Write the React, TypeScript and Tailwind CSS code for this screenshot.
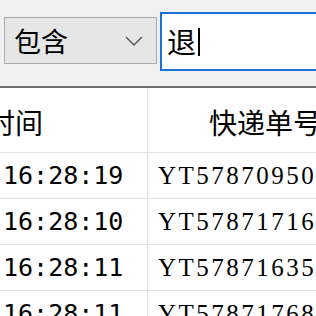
const rows = [
  { time: "16:28:19", no: "YT5787095021" },
  { time: "16:28:10", no: "YT5787171608" },
  { time: "16:28:11", no: "YT5787163512" },
  { time: "16:28:11", no: "YT5787176823" },
];

const cjk = { fontFamily: '"Noto Sans CJK SC", "Noto Sans", sans-serif' };

export default function App() {
  return (
    <div className="w-[316px] h-[316px] overflow-hidden bg-white text-black">
      <div className="h-[86px] bg-[#f0f0f0] flex items-start">
        <div className="mt-[17px] ml-[4px] w-[153px] h-[47px] shrink-0 border border-[#acacac] bg-[#e6e6e6] flex items-center pl-[9px] pr-[12px]">
          <span className="text-[27px] leading-none" style={cjk}>
            包含
          </span>
          <svg className="ml-auto" width="20" height="12" viewBox="0 0 20 12">
            <path d="M2 2 L10 10 L18 2" fill="none" stroke="#555" strokeWidth="1.4" />
          </svg>
        </div>
        <div className="mt-[12px] ml-[3px] w-[170px] h-[59px] shrink-0 border-2 border-[#1a73d1] bg-white flex items-center pl-[5px]">
          <span className="text-[29px] leading-none" style={cjk}>
            退
          </span>
          <span className="ml-[2px] w-[1.5px] h-[28px] bg-black" />
        </div>
      </div>
      <div className="h-[2px] bg-[#6e6e6e]" />
      <div className="flex h-[65px] border-b border-[#e3e3e3]">
        <div className="w-[148px] shrink-0 border-r border-[#dcdcdc] flex items-center overflow-hidden pt-[4px]">
          <span className="ml-[-13px] text-[28px] leading-none whitespace-nowrap" style={cjk}>
            时间
          </span>
        </div>
        <div className="flex-1 flex items-center overflow-hidden pt-[4px]">
          <span className="ml-[61px] text-[28px] leading-none whitespace-nowrap" style={cjk}>
            快递单号
          </span>
        </div>
      </div>
      {rows.map((r, i) => (
        <div key={i} className="flex h-[46px] border-b border-[#e3e3e3]">
          <div className="w-[148px] shrink-0 border-r border-[#dcdcdc] flex items-center pl-[3px]">
            <span
              className="text-[25px] leading-none whitespace-nowrap"
              style={{ fontFamily: '"DejaVu Sans Mono", monospace' }}
            >
              {r.time}
            </span>
          </div>
          <div className="flex-1 flex items-center pl-[10px] overflow-hidden">
            <span
              className="text-[25px] leading-none whitespace-nowrap tracking-[2.5px]"
              style={{ fontFamily: '"Liberation Serif", serif' }}
            >
              {r.no}
            </span>
          </div>
        </div>
      ))}
    </div>
  );
}
